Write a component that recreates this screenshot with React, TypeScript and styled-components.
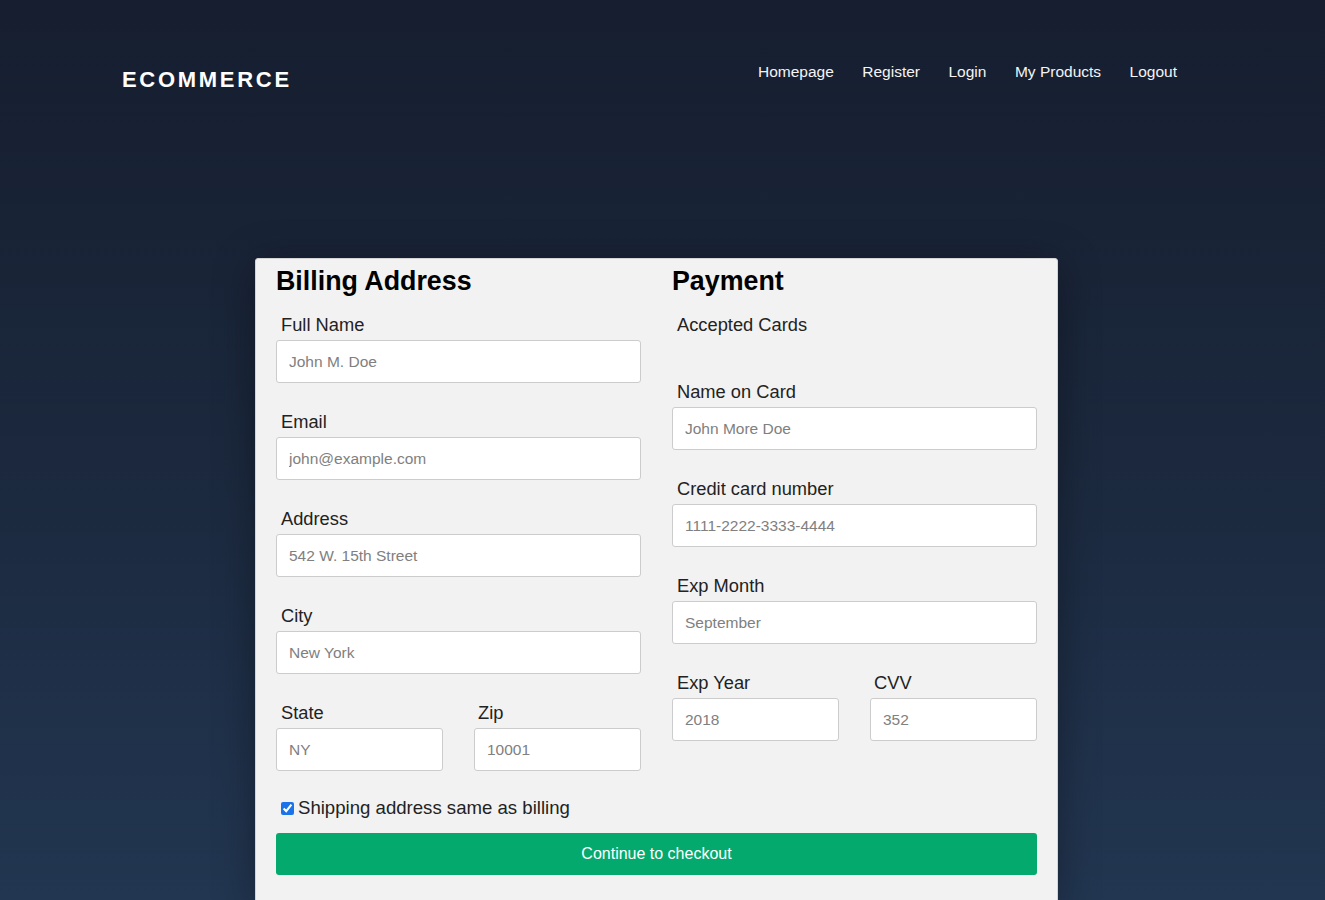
import React from "react";
import styled, { createGlobalStyle } from "styled-components";

const GlobalStyle = createGlobalStyle`
  html, body {
    margin: 0;
    padding: 0;
  }
  body {
    min-height: 900px;
    font-family: "Liberation Sans", Arial, sans-serif;
    background: linear-gradient(to bottom, #161e2f 0%, #1b283d 50%, #223651 100%);
    background-attachment: fixed;
  }
`;

const billing = [
  { label: "Full Name", placeholder: "John M. Doe" },
  { label: "Email", placeholder: "john@example.com" },
  { label: "Address", placeholder: "542 W. 15th Street" },
  { label: "City", placeholder: "New York" },
];

const payment = [
  { label: "Name on Card", placeholder: "John More Doe" },
  { label: "Credit card number", placeholder: "1111-2222-3333-4444" },
  { label: "Exp Month", placeholder: "September" },
];

const links = ["Homepage", "Register", "Login", "My Products", "Logout"];

function Field({ label, placeholder }: { label: string; placeholder: string }) {
  return (
    <FieldBox>
      <Label>{label}</Label>
      <Input type="text" placeholder={placeholder} />
    </FieldBox>
  );
}

function App() {
  return (
    <Page>
      <GlobalStyle />
      <Header>
        <Logo>ECOMMERCE</Logo>
        <NavMenu>
          {links.map((l) => (
            <NavLink key={l} href="#">
              {l}
            </NavLink>
          ))}
        </NavMenu>
      </Header>
      <Main>
        <Card>
          <Columns>
            <Column>
              <Title>Billing Address</Title>
              {billing.map((f) => (
                <Field key={f.label} {...f} />
              ))}
              <HalfRow>
                <Field label="State" placeholder="NY" />
                <Field label="Zip" placeholder="10001" />
              </HalfRow>
            </Column>
            <Column>
              <Title>Payment</Title>
              <Label>Accepted Cards</Label>
              <CardIcons />
              {payment.map((f) => (
                <Field key={f.label} {...f} />
              ))}
              <HalfRow>
                <Field label="Exp Year" placeholder="2018" />
                <Field label="CVV" placeholder="352" />
              </HalfRow>
            </Column>
          </Columns>
          <CheckRow>
            <Check type="checkbox" defaultChecked />
            Shipping address same as billing
          </CheckRow>
          <SubmitBtn type="button">Continue to checkout</SubmitBtn>
        </Card>
      </Main>
    </Page>
  );
}

export default App;

const Page = styled.div`
  min-height: 900px;
`;

const Header = styled.header`
  display: flex;
  align-items: flex-start;
  justify-content: space-between;
  padding: 63px 148px 0 122px;
`;

const Logo = styled.div`
  margin-top: 4px;
  color: #fff;
  font-size: 22px;
  line-height: 26px;
  font-weight: 700;
  letter-spacing: 2.7px;
`;

const NavMenu = styled.nav`
  display: flex;
  gap: 28.5px;
`;

const NavLink = styled.a`
  color: #f4f4f4;
  font-size: 15.5px;
  line-height: 18px;
  text-decoration: none;
`;

const Main = styled.main`
  padding: 165px 12px 0 0;
`;

const Card = styled.div`
  width: 761px;
  margin: 0 auto;
  padding: 7px 20px 30px;
  background: #f2f2f2;
  border: 1px solid #d4d4d4;
  border-radius: 3px;
  box-shadow: 0 6px 40px rgba(0, 0, 0, 0.35);
`;

const Columns = styled.div`
  display: grid;
  grid-template-columns: 1fr 1fr;
  column-gap: 31px;
`;

const Column = styled.div`
  display: flex;
  flex-direction: column;
`;

const Title = styled.h3`
  margin: 0 0 18px;
  color: #000;
  font-size: 26.8px;
  line-height: 31px;
  font-weight: 700;
`;

const FieldBox = styled.div`
  display: flex;
  flex-direction: column;
  margin-bottom: 29px;
`;

const Label = styled.label`
  display: block;
  margin: 0 0 5px 5px;
  color: #222;
  font-size: 18.3px;
  line-height: 20px;
`;

const Input = styled.input`
  box-sizing: border-box;
  width: 100%;
  height: 43px;
  padding: 0 12px;
  background: #fff;
  border: 1px solid #ccc;
  border-radius: 3px;
  font-family: "Liberation Sans", Arial, sans-serif;
  font-size: 15.5px;
  color: #333;
  outline: none;

  &::placeholder {
    color: #808080;
  }
`;

const CardIcons = styled.div`
  height: 42px;
`;

const HalfRow = styled.div`
  display: grid;
  grid-template-columns: 1fr 1fr;
  column-gap: 31px;

  & > div:last-child label {
    margin-left: 4px;
  }
`;

const CheckRow = styled.label`
  display: flex;
  align-items: center;
  margin: -2px 0 15px 5px;
  color: #222;
  font-size: 18.6px;
  line-height: 20px;
`;

const Check = styled.input`
  width: 13px;
  height: 13px;
  margin: 0 4px 0 0;
  accent-color: #1a73e8;
`;

const SubmitBtn = styled.button`
  display: block;
  width: 100%;
  height: 42px;
  border: none;
  border-radius: 3px;
  background: #04aa6d;
  color: #fff;
  font-family: "Liberation Sans", Arial, sans-serif;
  font-size: 16px;
  cursor: pointer;
`;
